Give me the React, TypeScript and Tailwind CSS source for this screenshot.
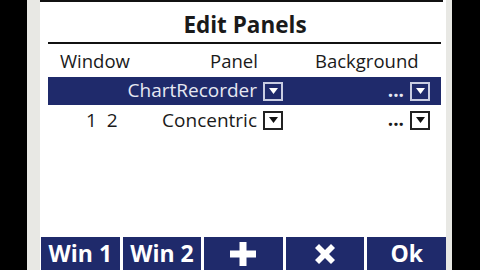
import React from "react";

function DropBox({ dark }: { dark?: boolean }) {
  return (
    <div
      className={
        "w-[20px] h-[19px] shrink-0 flex items-start justify-center pt-[4px] border-2 " +
        (dark ? "border-[#c9cde2] bg-[#1f2a6b]" : "border-[#222] bg-white")
      }
    >
      <svg width="9" height="6" viewBox="0 0 9 6">
        <polygon points="0,0 9,0 4.5,6" fill={dark ? "#ffffff" : "#111111"} />
      </svg>
    </div>
  );
}

export default function App() {
  const font = { fontFamily: '"Open Sans", "Noto Sans", sans-serif' };
  return (
    <div className="w-[480px] h-[270px] bg-black flex overflow-hidden" style={font}>
      <div className="w-[27px] shrink-0 bg-black" />
      <div className="w-[13px] shrink-0 bg-[#e8e8e4]" />
      <div className="w-[406px] shrink-0 bg-white flex flex-col">
        <div className="h-[2px] bg-[#111] mr-[3px]" />
        <div className="h-[40px] flex items-center justify-center pt-[6px] pl-[4px]">
          <span className="text-[22.5px] font-bold text-[#1a1a1a] leading-none">Edit Panels</span>
        </div>
        <div className="h-[2px] bg-[#111] ml-[8px] mr-[5px]" />
        <div className="h-[33px] flex items-center text-[18.5px] text-[#1a1a1a] pt-[2px] leading-none">
          <span className="w-[170px] pl-[20px]">Window</span>
          <span className="w-[105px]">Panel</span>
          <span>Background</span>
        </div>
        <div className="ml-[8px] mr-[5px] h-[28px] bg-[#1f2a6b] flex items-center text-[19px] text-[#e6e8f2] leading-none">
          <div className="w-[80px]" />
          <div className="w-[155px] flex items-center justify-end gap-[6px]">
            <span className="pb-[1px] whitespace-nowrap">ChartRecorder</span>
            <DropBox dark />
          </div>
          <div className="w-[147px] flex items-center justify-end gap-[6px]">
            <span className="pb-[2px] font-bold">...</span>
            <DropBox dark />
          </div>
        </div>
        <div className="ml-[8px] mr-[5px] h-[31px] flex items-center text-[19px] text-[#1a1a1a] leading-none">
          <div className="w-[80px] pl-[38px] pb-[1px] whitespace-nowrap">1&nbsp;&nbsp;2</div>
          <div className="w-[155px] flex items-center justify-end gap-[6px]">
            <span className="pb-[1px]">Concentric</span>
            <DropBox />
          </div>
          <div className="w-[147px] flex items-center justify-end gap-[6px]">
            <span className="pb-[2px] font-bold">...</span>
            <DropBox />
          </div>
        </div>
        <div className="flex-1" />
        <div className="h-[33px] flex gap-[3px] pl-[1px] bg-white">
          <div className="w-[79px] bg-[#1f2a6b] flex items-center justify-center text-white font-bold text-[23px]">Win 1</div>
          <div className="w-[79px] bg-[#1f2a6b] flex items-center justify-center text-white font-bold text-[23px]">Win 2</div>
          <div className="w-[79px] bg-[#1f2a6b] flex items-center justify-center">
            <svg width="28" height="26" viewBox="0 0 28 26">
              <path d="M10.5 1h7v8.5H27v7h-9.5V25h-7v-8.5H1v-7h9.5z" fill="#fff" />
            </svg>
          </div>
          <div className="w-[79px] bg-[#1f2a6b] flex items-center justify-center">
            <svg width="26" height="26" viewBox="0 0 26 26">
              <path d="M3 7L7 3l6 6 6-6 4 4-6 6 6 6-4 4-6-6-6 6-4-4 6-6z" fill="#fff" />
            </svg>
          </div>
          <div className="w-[79px] bg-[#1f2a6b] flex items-center justify-center text-white font-bold text-[23px]">Ok</div>
        </div>
      </div>
      <div className="w-[6px] shrink-0 bg-[#e8e8e4]" />
      <div className="flex-1 bg-black" />
    </div>
  );
}
